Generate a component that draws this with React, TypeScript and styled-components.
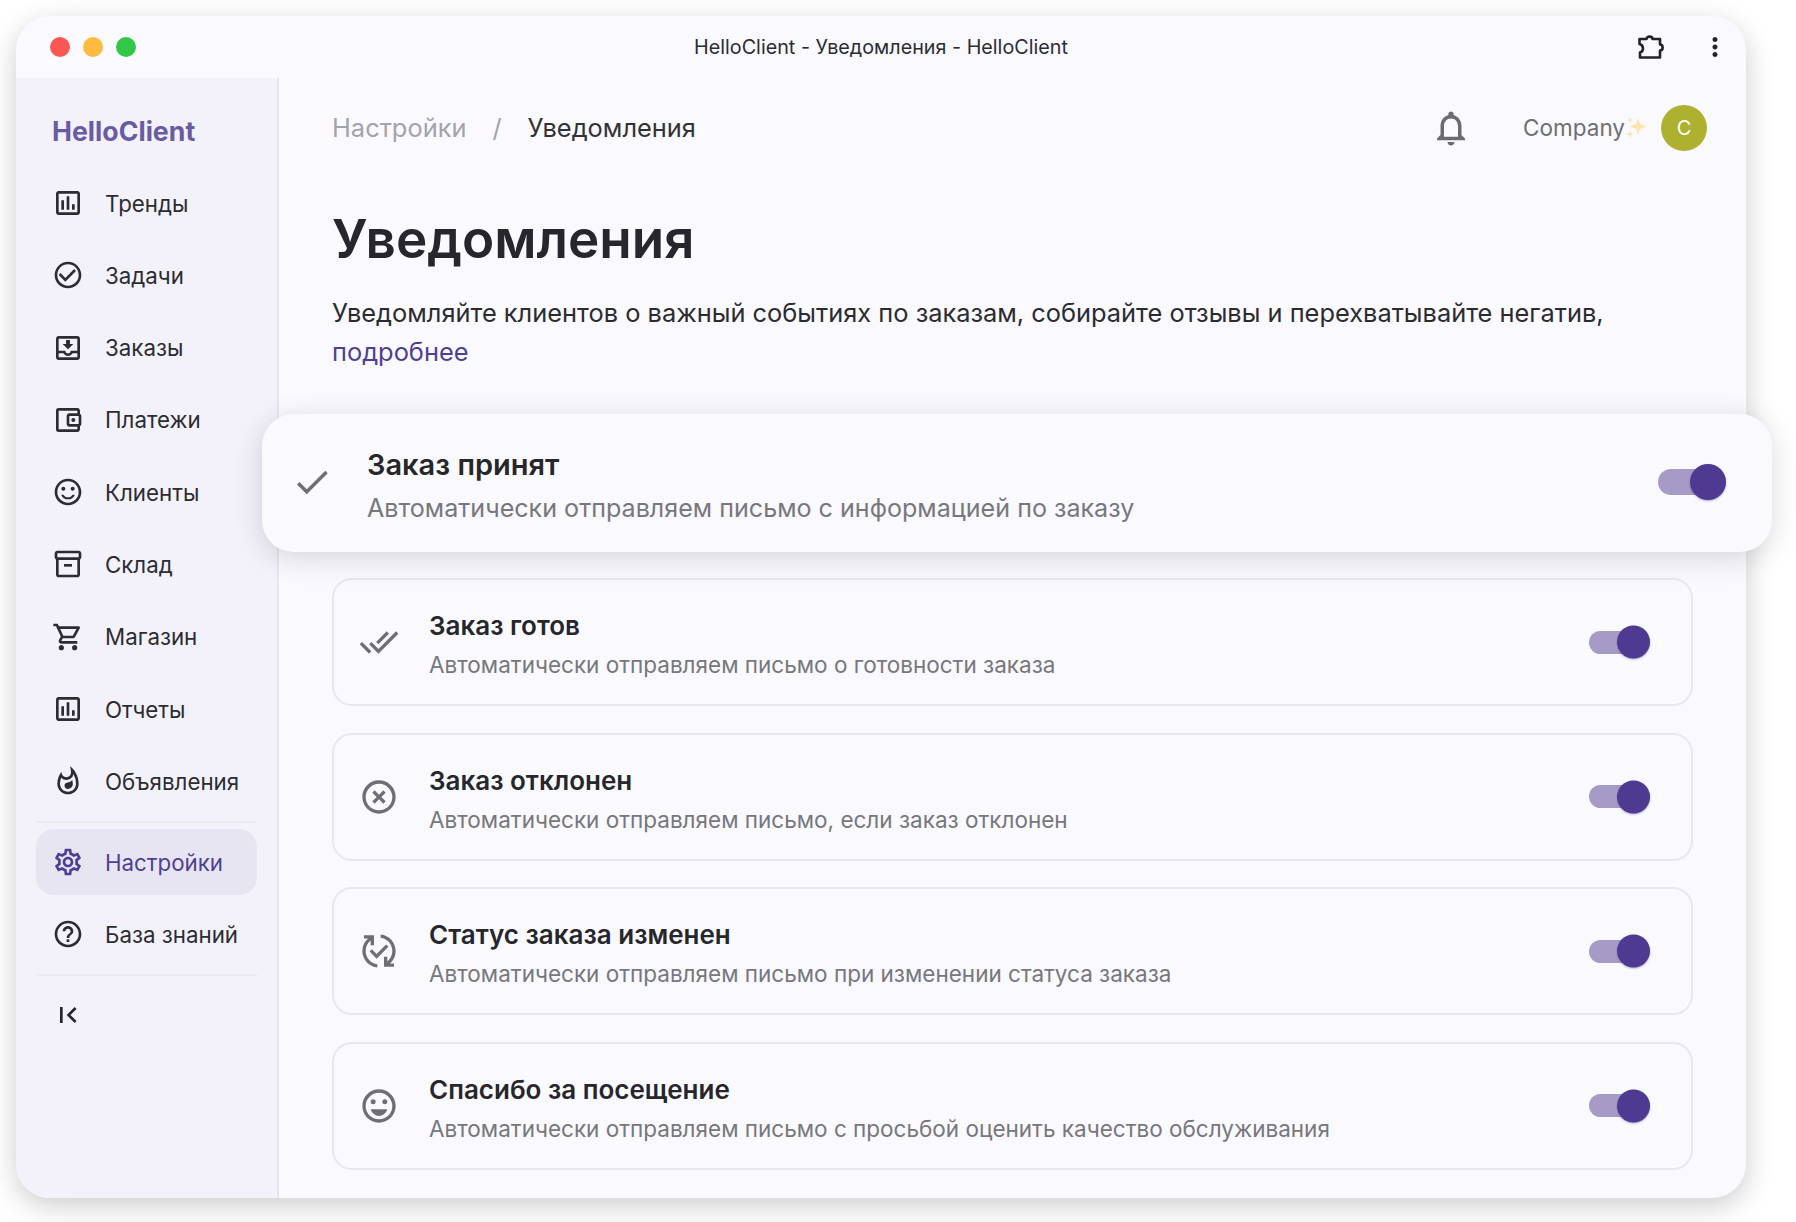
import React from 'react';
import styled, { createGlobalStyle } from 'styled-components';
import {
  MdOutlineAssessment,
  MdCheckCircleOutline,
  MdOutlineMoveToInbox,
  MdOutlineAccountBalanceWallet,
  MdOutlineSentimentSatisfied,
  MdOutlineInventory2,
  MdOutlineShoppingCart,
  MdOutlineWhatshot,
  MdOutlineSettings,
  MdHelpOutline,
  MdFirstPage,
  MdOutlineNotifications,
  MdMoreVert,
  MdCheck,
  MdDoneAll,
  MdHighlightOff,
  MdOutlinePublishedWithChanges,
  MdOutlineEmojiEmotions,
} from 'react-icons/md';

const navTop = [
  { label: 'Тренды', Icon: MdOutlineAssessment },
  { label: 'Задачи', Icon: MdCheckCircleOutline },
  { label: 'Заказы', Icon: MdOutlineMoveToInbox },
  { label: 'Платежи', Icon: MdOutlineAccountBalanceWallet },
  { label: 'Клиенты', Icon: MdOutlineSentimentSatisfied },
  { label: 'Склад', Icon: MdOutlineInventory2 },
  { label: 'Магазин', Icon: MdOutlineShoppingCart },
  { label: 'Отчеты', Icon: MdOutlineAssessment },
  { label: 'Объявления', Icon: MdOutlineWhatshot },
];

const notifications = [
  { title: 'Заказ готов', text: 'Автоматически отправляем письмо о готовности заказа', Icon: MdDoneAll },
  { title: 'Заказ отклонен', text: 'Автоматически отправляем письмо, если заказ отклонен', Icon: MdHighlightOff },
  { title: 'Статус заказа изменен', text: 'Автоматически отправляем письмо при изменении статуса заказа', Icon: MdOutlinePublishedWithChanges },
  { title: 'Спасибо за посещение', text: 'Автоматически отправляем письмо с просьбой оценить качество обслуживания', Icon: MdOutlineEmojiEmotions },
];

export default function App() {
  return (
    <>
      <GlobalStyle />
      <Page>
        <Window>
          <TitleBar>
            <Lights>
              <Light $color="#fc5753" />
              <Light $color="#fdbc40" />
              <Light $color="#33c748" />
            </Lights>
            <WindowTitle>HelloClient - Уведомления - HelloClient</WindowTitle>
            <BarActions>
              <svg width="28" height="28" viewBox="0 0 28 28" fill="none" stroke="currentColor" strokeWidth="2.600" strokeLinejoin="round">
                <path d="M3.500 6H10.500C10.500 2.800 16.500 2.800 16.500 6H24V11.500C27.500 11.500 27.500 17.500 24 17.500V24.500H4V19.500C8 18.500 8 12 3.500 11Z" />
              </svg>
              <MdMoreVert size={30} />
            </BarActions>
          </TitleBar>

          <Body>
            <Sidebar>
              <Logo>HelloClient</Logo>
              <NavList>
                {navTop.map(({ label, Icon }) => (
                  <NavItem key={label}>
                    <Icon size={32} />
                    <span>{label}</span>
                  </NavItem>
                ))}
              </NavList>
              <Divider />
              <NavItem $active>
                <MdOutlineSettings size={32} />
                <span>Настройки</span>
              </NavItem>
              <NavGap />
              <NavItem>
                <MdHelpOutline size={32} />
                <span>База знаний</span>
              </NavItem>
              <Divider />
              <Collapse>
                <MdFirstPage size={32} />
              </Collapse>
            </Sidebar>

            <Main>
              <Header>
                <Crumbs>
                  <CrumbMuted>Настройки</CrumbMuted>
                  <CrumbSlash>/</CrumbSlash>
                  <CrumbCurrent>Уведомления</CrumbCurrent>
                </Crumbs>
                <Bell>
                  <MdOutlineNotifications size={42} />
                </Bell>
                <Company>
                  Company
                  <svg width="22" height="24" viewBox="0 0 22 24">
                    <path d="M13 3l2 6 6 2.500-6 2.500-2 6-2-6-6-2.500 6-2.500z" fill="#f8e6ac" />
                    <path d="M5 15l1 3 3 1-3 1-1 3-1-3-3-1 3-1z" fill="#f8e6ac" />
                    <path d="M5 2l.8 2.200 2.200.8-2.200.8L5 8l-.8-2.200L2 5l2.200-.8z" fill="#f8e6ac" />
                  </svg>
                </Company>
                <Avatar>C</Avatar>
              </Header>

              <Title>Уведомления</Title>
              <Lead>
                Уведомляйте клиентов о важный событиях по заказам, собирайте отзывы и перехватывайте негатив,{' '}
                <LeadLink>подробнее</LeadLink>
              </Lead>

              <FeaturedCard>
                <FeaturedIcon>
                  <MdCheck size={42} />
                </FeaturedIcon>
                <CardText>
                  <FeaturedTitle>Заказ принят</FeaturedTitle>
                  <FeaturedSub>Автоматически отправляем письмо с информацией по заказу</FeaturedSub>
                </CardText>
                <Toggle $large>
                  <Thumb $large />
                </Toggle>
              </FeaturedCard>

              <CardList>
                {notifications.map(({ title, text, Icon }) => (
                  <Card key={title}>
                    <CardIcon>
                      <Icon size={40} />
                    </CardIcon>
                    <CardText>
                      <CardTitle>{title}</CardTitle>
                      <CardSub>{text}</CardSub>
                    </CardText>
                    <Toggle>
                      <Thumb />
                    </Toggle>
                  </Card>
                ))}
              </CardList>
            </Main>
          </Body>
        </Window>
      </Page>
    </>
  );
}

const GlobalStyle = createGlobalStyle`
  html, body {
    margin: 0;
    background: #fff;
  }
  body {
    font-family: Inter, "Noto Sans", sans-serif;
    color: #26262b;
  }
  * {
    box-sizing: border-box;
  }
`;

const Page = styled.div`
  width: 1796px;
  height: 1222px;
  padding: 16px 50px 24px 16px;
  overflow: hidden;
`;

const Window = styled.div`
  height: 1182px;
  display: flex;
  flex-direction: column;
  background: #faf9fe;
  border-radius: 34px;
  box-shadow: 0 8px 28px rgba(0, 0, 0, 0.2);
`;

const TitleBar = styled.div`
  position: relative;
  height: 62px;
  flex-shrink: 0;
  display: flex;
  align-items: center;
  justify-content: space-between;
  padding: 0 16px 0 34px;
`;

const Lights = styled.div`
  display: flex;
  gap: 13px;
`;

const Light = styled.div<{ $color: string }>`
  width: 20px;
  height: 20px;
  border-radius: 50%;
  background: ${(p) => p.$color};
`;

const WindowTitle = styled.div`
  position: absolute;
  left: 0;
  right: 0;
  text-align: center;
  font-size: 19.750px;
  color: #2c2c30;
`;

const BarActions = styled.div`
  display: flex;
  align-items: center;
  gap: 36px;
  color: #222327;
`;

const Body = styled.div`
  flex: 1;
  display: flex;
  min-height: 0;
`;

const Sidebar = styled.aside`
  width: 263px;
  flex-shrink: 0;
  padding: 0 20px;
  background: #f3f2fb;
  border-right: 2px solid #e6e5ec;
  border-bottom-left-radius: 34px;
`;

const Logo = styled.div`
  height: 66px;
  padding: 20px 0 0 16px;
  font-size: 26.700px;
  line-height: 66px;
  font-weight: 700;
  color: #6a5ca3;
  margin-bottom: 26px;
`;

const NavList = styled.nav`
  display: flex;
  flex-direction: column;
  gap: 6.300px;
`;

const NavItem = styled.div<{ $active?: boolean }>`
  height: 66px;
  display: flex;
  align-items: center;
  gap: 21px;
  padding-left: 16px;
  border-radius: 18px;
  font-size: 22.300px;
  color: ${(p) => (p.$active ? '#4f3f94' : '#2c2c31')};
  background: ${(p) => (p.$active ? '#e8e5f2' : 'transparent')};
`;

const NavGap = styled.div`
  height: 6px;
`;

const Divider = styled.div`
  height: 2px;
  background: #ebeaf2;
  margin: 7px 0 6px;
`;

const Collapse = styled.div`
  padding: 17px 0 0 16px;
  display: flex;
  color: #26262b;
`;

const Main = styled.main`
  flex: 1;
  min-width: 0;
  padding: 24px 53px 0;
`;

const Header = styled.header`
  height: 52px;
  display: flex;
  align-items: center;
  margin-right: -14px;
`;

const Crumbs = styled.div`
  flex: 1;
  display: flex;
  align-items: center;
  font-size: 25.400px;
  padding-bottom: 1px;
`;

const CrumbMuted = styled.span`
  color: #a3a3a8;
`;

const CrumbSlash = styled.span`
  color: #a3a3a8;
  margin: 0 26px;
`;

const CrumbCurrent = styled.span`
  color: #323236;
`;

const Bell = styled.div`
  display: flex;
  color: #6b6b70;
  margin-right: 51px;
`;

const Company = styled.div`
  display: flex;
  align-items: center;
  font-size: 22.500px;
  color: #6e6e73;
  margin-right: 14px;
  padding-bottom: 2px;
`;

const Avatar = styled.div`
  width: 46px;
  height: 46px;
  border-radius: 50%;
  background: #aeb02f;
  color: #fff;
  font-size: 20px;
  display: flex;
  align-items: center;
  justify-content: center;
`;

const Title = styled.h1`
  margin: 53px 0 0;
  font-size: 53px;
  line-height: 64px;
  font-weight: 600;
  color: #26262b;
`;

const Lead = styled.p`
  margin: 22px 0 0;
  font-size: 25.400px;
  line-height: 39px;
  color: #2b2b30;
`;

const LeadLink = styled.a`
  color: #4f3f94;
`;

const FeaturedCard = styled.div`
  position: relative;
  height: 138px;
  margin: 43px -79px 26px -70px;
  display: flex;
  align-items: center;
  padding: 0 46px 2px 28px;
  background: #faf9fe;
  border-radius: 32px;
  box-shadow: 0 6px 30px rgba(0, 0, 0, 0.15);
`;

const FeaturedIcon = styled.div`
  width: 44px;
  margin-right: 33px;
  display: flex;
  justify-content: center;
  color: #6e6e73;
`;

const CardText = styled.div`
  flex: 1;
  min-width: 0;
  padding-top: 7px;
`;

const FeaturedTitle = styled.div`
  font-size: 29px;
  line-height: 36px;
  font-weight: 600;
  color: #26262b;
  padding-top: 2px;
`;

const FeaturedSub = styled.div`
  margin-top: 7px;
  font-size: 25.100px;
  line-height: 36px;
  color: #77777c;
`;

const CardList = styled.div`
  display: flex;
  flex-direction: column;
  gap: 26.500px;
`;

const Card = styled.div`
  height: 128px;
  display: flex;
  align-items: center;
  padding: 0 41px 0 22px;
  border: 2px solid #e9e8ef;
  border-radius: 20px;
`;

const CardIcon = styled.div`
  width: 46px;
  margin-right: 27px;
  display: flex;
  justify-content: center;
  color: #6e6e73;
`;

const CardTitle = styled.div`
  font-size: 26px;
  line-height: 32px;
  font-weight: 600;
  color: #26262b;
`;

const CardSub = styled.div`
  margin-top: 7px;
  font-size: 22.500px;
  line-height: 32px;
  color: #77777c;
`;

const Toggle = styled.div<{ $large?: boolean }>`
  position: relative;
  flex-shrink: 0;
  width: ${(p) => (p.$large ? '68px' : '61px')};
  height: ${(p) => (p.$large ? '26px' : '23px')};
  border-radius: 13px;
  background: #a69bc6;
`;

const Thumb = styled.div<{ $large?: boolean }>`
  position: absolute;
  right: 0;
  top: 50%;
  width: ${(p) => (p.$large ? '36px' : '33px')};
  height: ${(p) => (p.$large ? '36px' : '33px')};
  transform: translateY(-50%);
  border-radius: 50%;
  background: #4f3a92;
  box-shadow: 0 1px 2px rgba(79, 58, 146, 0.4);
`;
